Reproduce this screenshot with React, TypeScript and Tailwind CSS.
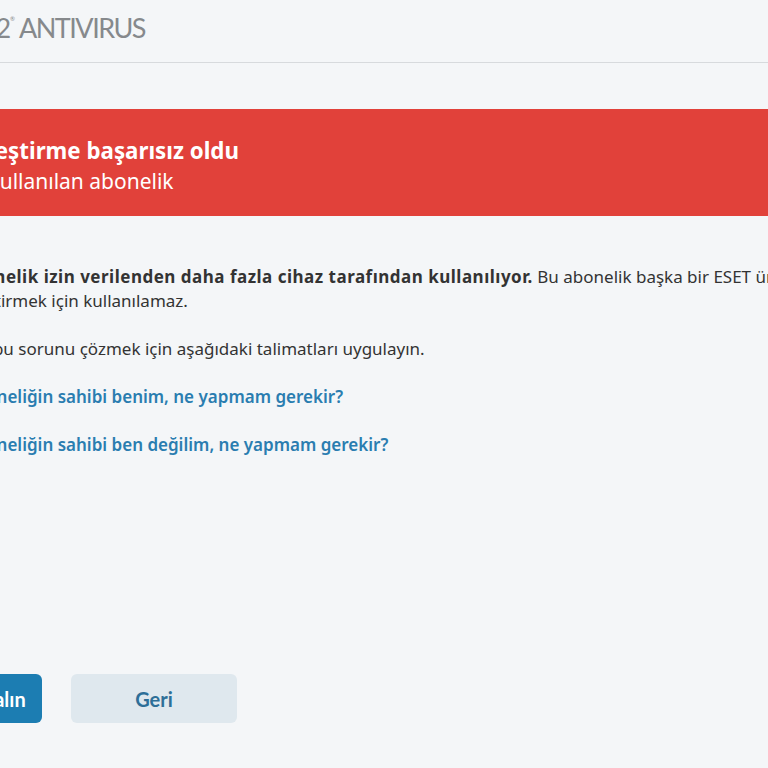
import React from "react";

export default function App() {
  const body = { fontFamily: '"Noto Sans", "Open Sans", sans-serif' };
  return (
    <div className="w-[768px] h-[768px] overflow-hidden bg-[#f4f6f8] flex flex-col" style={body}>
      <div className="h-[63px] shrink-0 border-b border-[#d7dadd] flex items-center pb-[8px]">
        <div className="-ml-[139px] flex items-start whitespace-nowrap text-[#86898c]" style={{ fontFamily: 'Lato, sans-serif' }}>
          <span className="text-[27px] leading-none tracking-[-1.3px]">ESET NOD32</span>
          <span className="text-[6px] leading-none mt-[2px] mr-[4px]">®</span>
          <span className="text-[27px] leading-none tracking-[-1.5px]">ANTIVIRUS</span>
        </div>
      </div>
      <div className="mt-[46px] h-[107px] shrink-0 bg-[#e1413a] flex flex-col justify-center pt-[6px] text-white whitespace-nowrap">
        <div className="-ml-[69px] text-[22.3px] font-bold leading-[31px]">Etkinleştirme başarısız oldu</div>
        <div className="-ml-[60px] text-[21px] leading-[31px]">Aşırı kullanılan abonelik</div>
      </div>
      <div className="pt-[49px] text-[#333] whitespace-nowrap">
        <p className="-ml-[67px] text-[17px] leading-[24px]">
          <b className="tracking-[0.5px]">Bu abonelik izin verilenden daha fazla cihaz tarafından kullanılıyor.</b> Bu abonelik başka bir ESET ürününü
        </p>
        <p className="-ml-[67px] text-[17px] leading-[24px]">etkinleştirmek için kullanılamaz.</p>
        <p className="-ml-[63px] mt-[24px] text-[17px] leading-[24px]">Lütfen bu sorunu çözmek için aşağıdaki talimatları uygulayın.</p>
        <div className="-ml-[36px] mt-[24px] flex flex-col gap-[24px] text-[#2a7db0] font-semibold text-[17px] leading-[24px]">
          <a>Aboneliğin sahibi benim, ne yapmam gerekir?</a>
          <a>Aboneliğin sahibi ben değilim, ne yapmam gerekir?</a>
        </div>
      </div>
      <div className="mt-auto mb-[45px] -ml-[72px] flex gap-[29px]" style={{ fontFamily: 'Lato, sans-serif' }}>
        <button className="w-[114px] h-[49px] rounded-[6px] bg-[#1c7db2] text-white font-bold text-[20px] whitespace-nowrap">Satın alın</button>
        <button className="w-[166px] h-[49px] rounded-[6px] bg-[#dfe8ee] text-[#2e6f98] font-bold text-[20px]">Geri</button>
      </div>
    </div>
  );
}
